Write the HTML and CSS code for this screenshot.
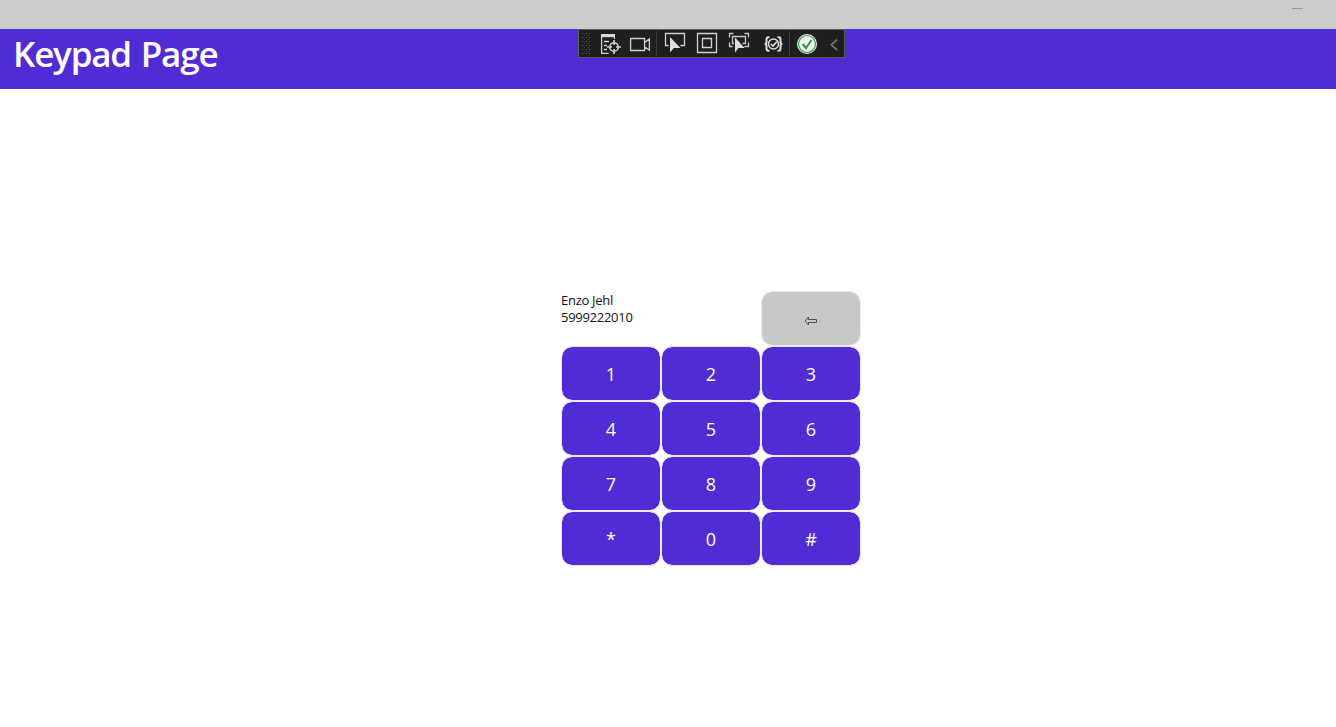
FILE: index.html
```html
<!DOCTYPE html>
<html lang="en">
<head>
<meta charset="utf-8">
<title>Keypad Page</title>
<link rel="stylesheet" href="styles.css">
</head>
<body>
<div class="titlebar"><span class="minimize"></span></div>
<header class="header">
  <h1 class="title">Keypad Page</h1>
  <div class="toolbar">
    <svg width="16" height="27" viewBox="579 30 16 27"><g stroke="#5a5a5a" stroke-width="1" stroke-dasharray="1 3"><path d="M582.5 33v22M586.5 33v22M589.5 33v22"/><path d="M584.5 35v19M588.5 35v19" stroke="#444"/></g></svg>
    <svg width="30" height="27" viewBox="595 30 30 27"><path d="M601 34h14v3.2h-14z" fill="#d8d8d8"/><g fill="none" stroke="#d0d0d0" stroke-width="1.3"><path d="M601.6 36v17.4h7M614.4 37v2M604 41.5h5M604 45.5h3M604 49.5h3"/><circle cx="614" cy="47" r="4.3" stroke-width="1.6"/><path d="M614 40v5M614 49v5M607 47h5M616 47h5" stroke-width="1.6"/></g></svg>
    <svg width="31" height="27" viewBox="625 30 31 27"><g fill="none" stroke="#d0d0d0" stroke-width="1.3"><path d="M630.6 38.5h14v12h-14zM644.6 42.5l4.8-3.6v11.4l-4.8-3.6"/></g></svg>
    <span class="sep"></span>
    <svg width="34" height="27" viewBox="657 30 34 27"><path d="M668.5 45.5h-3v-12h19v12h-4" fill="none" stroke="#d0d0d0" stroke-width="1.3"/><path d="M670 37v15.5l3.8-4.4h6.7z" fill="#dedede"/></svg>
    <svg width="32" height="27" viewBox="691 30 32 27"><g fill="none" stroke="#d0d0d0" stroke-width="1.3"><path d="M697.5 33.5h19v19h-19zM702.5 38.5h9v9h-9z"/></g></svg>
    <svg width="34" height="27" viewBox="723 30 34 27"><g fill="none" stroke="#c8c8c8" stroke-width="1.3"><path d="M729.5 37.5v-4h4M744.5 33.5h4v4M748.5 42.5v4h-4M729.5 42.5v4h3M734 43.5h-1.5v-7h13v7h-3"/></g><path d="M735 37.5v15l3.5-4.5h6.2z" fill="#dedede"/></svg>
    <svg width="32" height="27" viewBox="757 30 32 27"><g fill="none" stroke="#dcdcdc" stroke-width="2"><path d="M769.5 37.2h-1.2q-1.8 0-1.8 2v2.8q0 1.8-1.7 2q1.7.2 1.7 2v2.8q0 2 1.8 2h1.2M777.5 37.2h1.2q1.8 0 1.8 2v2.8q0 1.8 1.7 2q-1.7.2-1.7 2v2.8q0 2-1.8 2h-1.2"/><circle cx="773.5" cy="44" r="5" stroke-width="1.5"/><path d="M771 44l2 2 3.7-4.2" stroke-width="1.7"/></g></svg>
    <span class="sep"></span>
    <svg width="32" height="27" viewBox="790 30 32 27"><circle cx="807" cy="44" r="10" fill="#f0f0f0"/><circle cx="807" cy="44" r="8.5" fill="none" stroke="#36a03c" stroke-width="1.2"/><path d="M802.6 44l3.4 4 5.4-8" fill="none" stroke="#2e9b35" stroke-width="2"/></svg>
    <svg width="22" height="27" viewBox="822 30 22 27"><path d="M837.2 39.5l-5.8 5.3 5.8 5.3" fill="none" stroke="#707070" stroke-width="1.8"/></svg>
  </div>
</header>
<main class="content">
  <div class="keypad">
    <div class="caller"><div>Enzo Jehl</div><div>5999222010</div></div>
    <button class="key back"><svg width="14" height="10" viewBox="0 0 14 10"><path d="M1.2 5L4.5 1v2.5h8v3h-8V9z" fill="none" stroke="#505050" stroke-width="1"/></svg></button>
    <button class="key">1</button><button class="key">2</button><button class="key">3</button>
    <button class="key">4</button><button class="key">5</button><button class="key">6</button>
    <button class="key">7</button><button class="key">8</button><button class="key">9</button>
    <button class="key">*</button><button class="key">0</button><button class="key">#</button>
  </div>
</main>
</body>
</html>
```
FILE: styles.css
```css
* { box-sizing: border-box; }
body { margin: 0; height: 727px; overflow: hidden; background: #fff; font-family: "Open Sans", sans-serif; }
.titlebar { height: 29px; background: #ccc; display: flex; justify-content: flex-end; padding: 8px 33px 0 0; }
.minimize { width: 11px; height: 1px; background: #999; }
.header { position: relative; height: 60px; background: #512bd4; padding-left: 13px; }
.title { margin: 0; color: #fff; font-family: "Open Sans", sans-serif; font-size: 35px; font-weight: 600; line-height: 50px; letter-spacing: -1.2px; word-spacing: 2px; white-space: nowrap; }
.toolbar { position: absolute; left: 578px; top: 0; width: 267px; height: 29px; display: flex; background: #1f1f1f; border: 1px solid #5c5c55; }
.toolbar svg { display: block; flex: none; }
.sep { width: 1px; height: 25px; margin-top: 1px; background: #3d3d3d; }
.content { display: flex; padding: 202px 0 0 561px; }
.keypad { display: grid; grid-template-columns: repeat(3, 100px); grid-auto-rows: 55px; }
.caller { grid-column: span 2; padding-top: 1px; font-size: 13px; line-height: 17px; letter-spacing: -0.28px; color: #111; }
.key { margin: 0; padding: 2px 0 0; border: 1px solid #ebe9f0; border-radius: 11px; background: #512bd4; background-clip: padding-box; color: #fff; font: 18px/51px "Open Sans", sans-serif; display: flex; align-items: center; justify-content: center; width: 100px; height: 55px; }
.back { background-color: #c8c8c8; padding-top: 5px; }
```
